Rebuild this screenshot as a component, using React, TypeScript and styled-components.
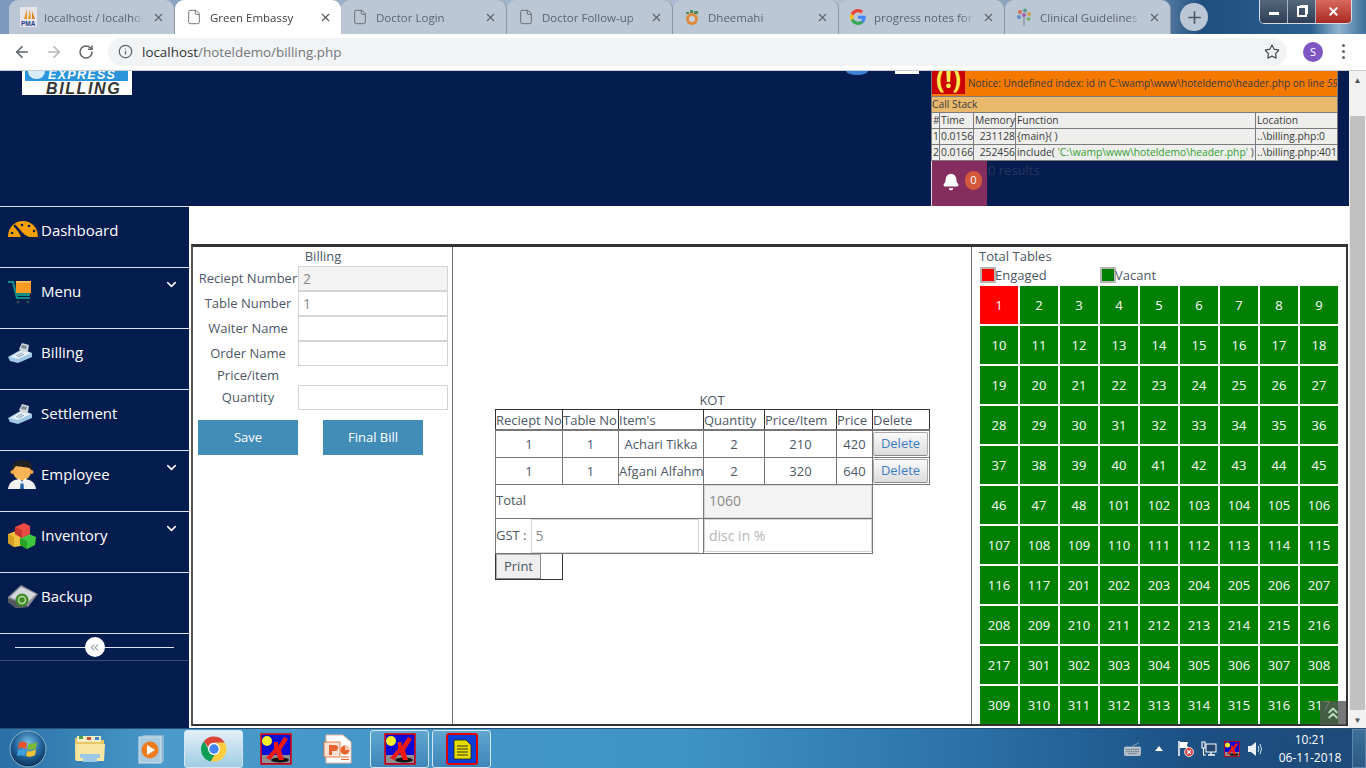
import styled, { createGlobalStyle } from 'styled-components';
import { ChevronDown, ChevronsLeft, ChevronsUp, File, Plus, X, ArrowLeft, ArrowRight, RotateCw, Info, Star, Bell } from 'lucide-react';

const GlobalStyle = createGlobalStyle`
  html, body {
    margin: 0;
    padding: 0;
    height: 100%;
    overflow: hidden;
  }
  * {
    box-sizing: border-box;
  }
  body {
    font-family: "Open Sans", "Liberation Sans", sans-serif;
    font-size: 13px;
    color: #4d5766;
  }
`;

const tabs = [
  { title: 'localhost / localhost', icon: 'pma' },
  { title: 'Green Embassy', icon: 'doc', active: true },
  { title: 'Doctor Login', icon: 'doc' },
  { title: 'Doctor Follow-up', icon: 'doc' },
  { title: 'Dheemahi', icon: 'dhee' },
  { title: 'progress notes for patient', icon: 'google' },
  { title: 'Clinical Guidelines (', icon: 'tree' },
];

const tableNumbers = [
  ...Array.from({ length: 48 }, (_, i) => i + 1),
  ...Array.from({ length: 17 }, (_, i) => i + 101),
  ...Array.from({ length: 17 }, (_, i) => i + 201),
  ...Array.from({ length: 17 }, (_, i) => i + 301),
];

const kotRows = [
  { receipt: 1, table: 1, item: 'Achari Tikka', qty: 2, rate: 210, price: 420 },
  { receipt: 1, table: 1, item: 'Afgani Alfahm', qty: 2, rate: 320, price: 640 },
];

function PmaIcon() {
  return (
    <svg width="17" height="20" viewBox="0 0 17 20">
      <rect width="17" height="20" fill="#e4e4ea" />
      <path d="M4 12 L7 2 L7 12Z" fill="#e8912a" />
      <path d="M8 12 L10 2 L11 12Z" fill="#e8a02a" />
      <path d="M12 12 L12 4 L15 12Z" fill="#d97f1e" />
      <text x="1" y="19" fontSize="6.5" fontWeight="700" fill="#27408b" fontFamily="Liberation Sans">PMA</text>
    </svg>
  );
}

function DheemahiIcon() {
  return (
    <svg width="16" height="18" viewBox="0 0 16 18">
      <circle cx="8" cy="11" r="6" fill="#e08a3c" />
      <circle cx="8" cy="11" r="3" fill="#c9d3df" />
      <path d="M2 4h3v2H2zM6 2h3v3H6zM10 3h4v3h-4z" fill="#4f8a5b" />
    </svg>
  );
}

function GoogleIcon() {
  return (
    <svg width="16" height="16" viewBox="0 0 48 48">
      <path fill="#EA4335" d="M24 9.5c3.5 0 6.700 1.300 9.100 3.500l6.800-6.800C35.800 2.400 30.300 0 24 0 14.600 0 6.500 5.400 2.600 13.200l7.900 6.100C12.400 13.700 17.700 9.500 24 9.500z" />
      <path fill="#4285F4" d="M46.900 24.500c0-1.600-.1-3.100-.4-4.500H24v9h12.900c-.6 3-2.200 5.500-4.700 7.200l7.700 6c4.500-4.200 7-10.300 7-17.700z" />
      <path fill="#FBBC05" d="M10.500 28.700c-.5-1.500-.8-3-.8-4.700s.3-3.200.8-4.700l-7.900-6.100C.9 16.500 0 20.100 0 24s.9 7.500 2.600 10.800l7.900-6.100z" />
      <path fill="#34A853" d="M24 48c6.500 0 11.900-2.100 15.900-5.800l-7.700-6c-2.100 1.400-4.900 2.300-8.200 2.300-6.300 0-11.600-4.200-13.500-9.800l-7.900 6.100C6.500 42.600 14.600 48 24 48z" />
    </svg>
  );
}

function TreeIcon() {
  return (
    <svg width="16" height="18" viewBox="0 0 16 18">
      <path d="M8 8v10" stroke="#8a9aa8" strokeWidth="1.400" />
      <circle cx="4" cy="4" r="2" fill="#d9694f" />
      <circle cx="9" cy="2.500" r="2" fill="#4f9d8a" />
      <circle cx="13" cy="6" r="2" fill="#c9a04b" />
      <circle cx="3" cy="9" r="2" fill="#5d8fc9" />
      <circle cx="8" cy="7" r="2" fill="#a65fae" />
      <circle cx="12.500" cy="11" r="1.800" fill="#6fae5a" />
    </svg>
  );
}

function TabIcon({ kind }: { kind: string }) {
  if (kind === 'pma') return <PmaIcon />;
  if (kind === 'dhee') return <DheemahiIcon />;
  if (kind === 'google') return <GoogleIcon />;
  if (kind === 'tree') return <TreeIcon />;
  return <File size={16} strokeWidth={1.3} color="#5f6368" />;
}

function GaugeIcon() {
  return (
    <svg width="32" height="24" viewBox="0 0 32 24">
      <path d="M1 18 C1 8 8 2 16 2 C24 2 31 8 31 18 L20 18 L9 8 L14 18Z" fill="#f5a000" />
      <path d="M8 7 L17 17 L21 19" fill="none" stroke="#051c4f" strokeWidth="2.600" strokeLinecap="round" />
      <circle cx="15" cy="6" r="1.300" fill="#051c4f" />
      <circle cx="22" cy="7" r="1.300" fill="#051c4f" />
      <circle cx="27" cy="12" r="1.300" fill="#051c4f" />
      <circle cx="5" cy="14" r="1.300" fill="#051c4f" />
    </svg>
  );
}

function CartIcon() {
  return (
    <svg width="26" height="24" viewBox="0 0 26 24">
      <path d="M1 2 H6 L10 18 H23" fill="none" stroke="#0f8f82" strokeWidth="2.200" />
      <path d="M8 13 H23 V16 H9Z" fill="#0f8f82" />
      <rect x="9" y="1" width="15" height="12" fill="#f59a23" />
      <rect x="9" y="1" width="15" height="2" fill="#fbb95a" />
      <circle cx="11" cy="22" r="1.600" fill="#2f4a55" />
      <circle cx="21" cy="22" r="1.600" fill="#2f4a55" />
    </svg>
  );
}

function RegisterIcon() {
  return (
    <svg width="26" height="22" viewBox="0 0 26 22">
      <path d="M1 15 L15 7 L25 11 L25 15 L11 21 L3 19Z" fill="#9fc7e6" />
      <path d="M3 15 L15 8 L24 11 L11 17Z" fill="#e6eff6" />
      <path d="M12 7 L15 1 L22 3 L21 9 L16 10Z" fill="#cfd6dc" />
      <path d="M15 3 L20 4 L19 7 L14 6Z" fill="#7d8a94" />
      <path d="M9 14 L15 11 M11 15 L17 12" stroke="#8aa0b0" strokeWidth="1" />
    </svg>
  );
}

function EmployeeIcon() {
  return (
    <svg width="30" height="30" viewBox="0 0 30 30">
      <path d="M1 29 C2 21 8 19 15 19 C22 19 28 21 29 29Z" fill="#f1f1f1" />
      <path d="M14 20 L16 20 L17 29 L13 29Z" fill="#1f5fa8" />
      <ellipse cx="15" cy="11" rx="9" ry="9.500" fill="#f8b556" />
      <circle cx="5.500" cy="12" r="2" fill="#f1a640" />
      <circle cx="24.500" cy="12" r="2" fill="#f1a640" />
      <path d="M5 10 C4 3 10 0 16 0 C23 0 26 4 25 10 C22 6 15 8 9 6 C8 8 6 9 5 10Z" fill="#222" />
      <path d="M11 18 L15 22 L19 18 L19 20 L15 24 L11 20Z" fill="#fff" />
    </svg>
  );
}

function BlocksIcon() {
  return (
    <svg width="30" height="28" viewBox="0 0 30 28">
      <path d="M1 12 L9 9 L15 13 L14 24 L7 25 L1 21Z" fill="#eebf3e" />
      <path d="M1 12 L7 15 L7 25 L1 21Z" fill="#d69f24" />
      <path d="M13 16 L22 12 L29 15 L28 23 L20 27 L13 23Z" fill="#3ec63e" />
      <path d="M13 16 L20 19 L20 27 L13 23Z" fill="#2aa22a" />
      <path d="M8 5 L17 1 L23 4 L23 12 L15 16 L8 12Z" fill="#ef4b45" />
      <path d="M8 5 L15 8 L15 16 L8 12Z" fill="#c93530" />
    </svg>
  );
}

function BackupIcon() {
  return (
    <svg width="32" height="26" viewBox="0 0 32 26">
      <path d="M1 13 L14 1 L31 10 L21 23 L9 24 L1 18Z" fill="#8b9097" />
      <path d="M3 13 L14 3 L29 10 L19 20Z" fill="#d5d8dc" />
      <path d="M1 14 L19 21 L21 23 L9 24 L1 18Z" fill="#54585e" />
      <circle cx="15" cy="16" r="6.500" fill="#3d8a24" />
      <circle cx="15" cy="16" r="3.500" fill="none" stroke="#b5d9a5" strokeWidth="1.500" />
    </svg>
  );
}

function StartOrb() {
  return (
    <svg width="38" height="38" viewBox="0 0 38 38">
      <defs>
        <radialGradient id="orb" cx="50%" cy="35%" r="65%">
          <stop offset="0" stopColor="#7cc4e8" />
          <stop offset="0.6" stopColor="#1f5f96" />
          <stop offset="1" stopColor="#0b2f55" />
        </radialGradient>
      </defs>
      <circle cx="19" cy="19" r="18" fill="url(#orb)" stroke="#8bb7d2" strokeWidth="1" />
      <path d="M10 13 C13 11 15 12 18 13 L17 19 C14 18 12 17 9 19Z" fill="#e8552b" />
      <path d="M19.500 13 C22 14 25 14 28 12 L27 18 C24 20 21 20 18.500 19Z" fill="#7dbb32" />
      <path d="M9 20 C12 19 14 19 17 20 L16 26 C13 25 11 25 8 26Z" fill="#3b9fe0" />
      <path d="M18 21 C21 22 24 21 27 19 L26 25 C23 27 20 27 17 26Z" fill="#f6c52f" />
    </svg>
  );
}

function FolderIcon() {
  return (
    <svg width="32" height="30" viewBox="0 0 32 30">
      <path d="M1 4 H12 L14 6 H30 V26 H1Z" fill="#e7c766" />
      <rect x="3" y="2" width="24" height="6" fill="#f8eec4" />
      <rect x="5" y="2" width="4" height="3" fill="#4da24c" />
      <rect x="13" y="3" width="4" height="3" fill="#cf4b3d" />
      <rect x="21" y="3" width="4" height="3" fill="#3d86c9" />
      <path d="M1 10 H31 L30 27 H2Z" fill="#f8e6a2" />
      <path d="M6 20 H26 V24 H23 V28 H9 V24 H6Z" fill="#9cc9e6" />
    </svg>
  );
}

function MediaIcon() {
  return (
    <svg width="28" height="32" viewBox="0 0 28 32">
      <rect x="5" y="2" width="21" height="27" fill="#8eb5cf" />
      <rect x="1" y="4" width="22" height="26" fill="#a9cbe0" stroke="#d3e3ee" />
      <circle cx="12" cy="17" r="8.500" fill="#ed7d1f" />
      <path d="M9 12 L17 17 L9 22Z" fill="#fff" />
    </svg>
  );
}

function ChromeIcon() {
  return (
    <svg width="30" height="30" viewBox="0 0 48 48">
      <path fill="#db4437" d="M24 4a20 20 0 0 1 17.300 10H24a10 10 0 0 0-9.500 6.900L7.800 11.700A20 20 0 0 1 24 4z" />
      <path fill="#0f9d58" d="M7.800 11.700l8.600 14.900a10 10 0 0 0 8.700 7.300l-6 10.200A20 20 0 0 1 7.800 11.700z" />
      <path fill="#ffcd40" d="M41.300 14A20 20 0 0 1 19 43.400l8.700-14.900a10 10 0 0 0-.8-14.500z" />
      <circle cx="24" cy="24" r="9.500" fill="#fff" />
      <circle cx="24" cy="24" r="7.500" fill="#4285f4" />
    </svg>
  );
}

function XAppIcon() {
  return (
    <svg width="32" height="32" viewBox="0 0 32 32">
      <rect x="1" y="1" width="30" height="30" fill="#0b0bd8" stroke="#e00000" strokeWidth="1.500" />
      <rect x="2" y="22" width="28" height="8" fill="#8f8f8f" />
      <circle cx="7" cy="8" r="5" fill="#f2ee2b" />
      <ellipse cx="20" cy="27" rx="9" ry="2.500" fill="#111" />
      <path d="M24 4 L28 6 L21 17 L24 27 L19 27 L16 20 L10 27 L6 25 L14 16 L14 9 L18 9 L18 13Z" fill="#ee1a10" />
    </svg>
  );
}

function PowerPointIcon() {
  return (
    <svg width="30" height="32" viewBox="0 0 30 32">
      <path d="M3 2 H20 L28 9 V30 H3Z" fill="#fff" stroke="#e9b6a0" />
      <path d="M1 9 H17 V24 H1Z" fill="#fbe2d6" stroke="#e8642c" strokeWidth="0.800" />
      <path d="M6 12 H12 C14 12 15 13 15 15 C15 17 14 18 12 18 H9 V22 H6Z" fill="#e8642c" />
      <circle cx="22" cy="17" r="4.500" fill="#e8642c" />
      <path d="M22 17 V12.500 A4.500 4.500 0 0 1 26.500 17Z" fill="#f9c9b3" />
      <path d="M18 24 H26 M18 26.500 H26" stroke="#e8642c" strokeWidth="1" />
    </svg>
  );
}

function NoteAppIcon() {
  return (
    <svg width="32" height="32" viewBox="0 0 32 32">
      <rect x="1" y="1" width="30" height="30" rx="2" fill="#0b3fd8" stroke="#e00000" strokeWidth="2" />
      <path d="M8 7 H20 L25 12 V26 H8Z" fill="#e6dc00" stroke="#222" strokeWidth="0.800" />
      <path d="M11 13 H22 M11 16 H22 M11 19 H22 M11 22 H22" stroke="#222" strokeWidth="0.900" />
    </svg>
  );
}

function TrayFlagIcon() {
  return (
    <svg width="17" height="17" viewBox="0 0 17 17">
      <path d="M2 1 V16" stroke="#fff" strokeWidth="1.500" />
      <path d="M3 2 H11 L10 5 L11 8 H3Z" fill="#fff" />
      <circle cx="12" cy="12" r="4.500" fill="#e23b3b" stroke="#fff" strokeWidth="0.800" />
      <path d="M10 10 L14 14 M14 10 L10 14" stroke="#fff" strokeWidth="1.200" />
    </svg>
  );
}

function TrayNetworkIcon() {
  return (
    <svg width="16" height="16" viewBox="0 0 16 16">
      <rect x="5" y="3" width="10" height="8" fill="#24466e" stroke="#fff" />
      <path d="M7 14 H14 M10 11 V14" stroke="#fff" strokeWidth="1.300" />
      <path d="M1 1 H4 V7 H1Z M2.500 7 V14 H5" fill="none" stroke="#fff" strokeWidth="1.100" />
    </svg>
  );
}

function TrayVolumeIcon() {
  return (
    <svg width="17" height="16" viewBox="0 0 17 16">
      <path d="M1 5 H4 L9 1 V15 L4 11 H1Z" fill="#e8eef4" />
      <path d="M11 5 Q13 8 11 11 M13 3 Q16 8 13 13" fill="none" stroke="#d5e0ea" strokeWidth="1" />
    </svg>
  );
}

function TrayKeyboardIcon() {
  return (
    <svg width="17" height="14" viewBox="0 0 17 14">
      <rect x="0.500" y="5" width="16" height="8.500" rx="1" fill="#aeb9c4" stroke="#dfe5ea" strokeWidth="0.600" />
      <path d="M2 7.500 H15 M2 9.500 H15 M4 11.500 H13" stroke="#6f7d8a" strokeWidth="1" strokeDasharray="1.500 0.800" />
      <path d="M9 5 C9 2 13 3 15 0.500" fill="none" stroke="#aeb9c4" strokeWidth="0.800" />
    </svg>
  );
}

export default function App() {
  return (
    <>
      <GlobalStyle />
      <Screen>
        <TabStrip>
          <TabList>
            {tabs.map((tab) => (
              <Tab key={tab.title} $active={tab.active}>
                <TabIconBox>
                  <TabIcon kind={tab.icon} />
                </TabIconBox>
                <TabTitle>{tab.title}</TabTitle>
                <X size={13} strokeWidth={2} color={tab.active ? '#555' : '#5f6368'} />
              </Tab>
            ))}
          </TabList>
          <NewTab>
            <Plus size={19} strokeWidth={2.2} color="#4f5b6b" />
          </NewTab>
          <WindowControls>
            <WinButton>
              <MinGlyph />
            </WinButton>
            <WinButton>
              <RestoreGlyph />
            </WinButton>
            <WinClose>
              <X size={13} strokeWidth={3.5} color="#fff" />
            </WinClose>
          </WindowControls>
        </TabStrip>

        <Toolbar>
          <NavIcon>
            <ArrowLeft size={18} color="#5f6368" strokeWidth={2.2} />
          </NavIcon>
          <NavIcon>
            <ArrowRight size={18} color="#b4b6b9" strokeWidth={2.2} />
          </NavIcon>
          <NavIcon>
            <RotateCw size={16} color="#5f6368" strokeWidth={2.2} />
          </NavIcon>
          <Omnibox>
            <Info size={15} color="#5f6368" strokeWidth={2} />
            <UrlText>
              <UrlHost>localhost</UrlHost>/hoteldemo/billing.php
            </UrlText>
            <OmniStar>
              <Star size={16} color="#4a4e52" strokeWidth={1.8} />
            </OmniStar>
          </Omnibox>
          <Avatar>S</Avatar>
          <MenuDots>
            <i />
            <i />
            <i />
          </MenuDots>
        </Toolbar>

        <Viewport>
          <Page>
            <Header>
              <Logo>
                <LogoTop>
                  <LogoGlobe />
                  EXPRESS
                </LogoTop>
                <LogoBottom>BILLING</LogoBottom>
              </Logo>
              <HeaderDot />
              <HeaderBar />
              <HeaderRight>
                <ErrorTable>
                  <colgroup>
                    <col width="8" />
                    <col width="34" />
                    <col width="42" />
                    <col width="240" />
                    <col width="82" />
                  </colgroup>
                  <tbody>
                    <tr>
                      <NoticeCell colSpan={5}>
                        <NoticeRow>
                          <NoticeMark>(!)</NoticeMark>
                          <NoticeText>
                            Notice: Undefined index: id in C:\wamp\www\hoteldemo\header.php on line <em>59</em>
                          </NoticeText>
                        </NoticeRow>
                      </NoticeCell>
                    </tr>
                    <tr>
                      <StackTitle colSpan={5}>Call Stack</StackTitle>
                    </tr>
                    <tr>
                      <ErrorHead>#</ErrorHead>
                      <ErrorHead>Time</ErrorHead>
                      <ErrorHead>Memory</ErrorHead>
                      <ErrorHead>Function</ErrorHead>
                      <ErrorHead>Location</ErrorHead>
                    </tr>
                    <tr>
                      <ErrorCell>1</ErrorCell>
                      <ErrorCell>0.0156</ErrorCell>
                      <ErrorCell $right>231128</ErrorCell>
                      <ErrorCell>{'{main}( )'}</ErrorCell>
                      <ErrorCell>..\billing.php:0</ErrorCell>
                    </tr>
                    <tr>
                      <ErrorCell>2</ErrorCell>
                      <ErrorCell>0.0166</ErrorCell>
                      <ErrorCell $right>252456</ErrorCell>
                      <ErrorCell>
                        include( <GreenText>'C:\wamp\www\hoteldemo\header.php'</GreenText> )
                      </ErrorCell>
                      <ErrorCell>..\billing.php:401</ErrorCell>
                    </tr>
                  </tbody>
                </ErrorTable>
                <NotifyRow>
                  <BellBox>
                    <Bell size={18} color="#fff" fill="#fff" />
                    <BellBadge>0</BellBadge>
                  </BellBox>
                  <ResultsText>0 results</ResultsText>
                </NotifyRow>
              </HeaderRight>
            </Header>

            <Body>
              <Sidebar>
                <SideItem>
                  <SideIcon><GaugeIcon /></SideIcon>
                  <SideLabel>Dashboard</SideLabel>
                </SideItem>
                <SideItem>
                  <SideIcon><CartIcon /></SideIcon>
                  <SideLabel>Menu</SideLabel>
                  <SideChevron><ChevronDown size={15} strokeWidth={2.4} color="#fff" /></SideChevron>
                </SideItem>
                <SideItem>
                  <SideIcon><RegisterIcon /></SideIcon>
                  <SideLabel>Billing</SideLabel>
                </SideItem>
                <SideItem>
                  <SideIcon><RegisterIcon /></SideIcon>
                  <SideLabel>Settlement</SideLabel>
                </SideItem>
                <SideItem>
                  <SideIcon><EmployeeIcon /></SideIcon>
                  <SideLabel>Employee</SideLabel>
                  <SideChevron><ChevronDown size={15} strokeWidth={2.4} color="#fff" /></SideChevron>
                </SideItem>
                <SideItem>
                  <SideIcon><BlocksIcon /></SideIcon>
                  <SideLabel>Inventory</SideLabel>
                  <SideChevron><ChevronDown size={15} strokeWidth={2.4} color="#fff" /></SideChevron>
                </SideItem>
                <SideItem>
                  <SideIcon><BackupIcon /></SideIcon>
                  <SideLabel>Backup</SideLabel>
                </SideItem>
                <SideToggle>
                  <ToggleKnob>
                    <ChevronsLeft size={13} color="#9aa3ad" strokeWidth={2} />
                  </ToggleKnob>
                </SideToggle>
              </Sidebar>

              <Main>
                <Panel>
                  <BillingColumn>
                    <ColumnTitle>Billing</ColumnTitle>
                    <FormGrid>
                      <FieldLabel>Reciept Number</FieldLabel>
                      <FieldInput value="2" disabled readOnly />
                      <FieldLabel>Table Number</FieldLabel>
                      <FieldInput value="1" readOnly />
                      <FieldLabel>Waiter Name</FieldLabel>
                      <FieldInput readOnly />
                      <FieldLabel>Order Name</FieldLabel>
                      <FieldInput readOnly />
                      <FieldLabel>Price/item</FieldLabel>
                      <span />
                      <FieldLabel>Quantity</FieldLabel>
                      <FieldInput readOnly />
                    </FormGrid>
                    <ActionRow>
                      <ActionButton>Save</ActionButton>
                      <ActionButton>Final Bill</ActionButton>
                    </ActionRow>
                  </BillingColumn>

                  <KotColumn>
                    <KotTitle>KOT</KotTitle>
                    <KotTable>
                      <colgroup>
                        <col width="67" />
                        <col width="56" />
                        <col width="85" />
                        <col width="61" />
                        <col width="72" />
                        <col width="36" />
                        <col width="57" />
                      </colgroup>
                      <tbody>
                        <tr>
                          <KotHead>Reciept No</KotHead>
                          <KotHead>Table No</KotHead>
                          <KotHead>Item's</KotHead>
                          <KotHead>Quantity</KotHead>
                          <KotHead>Price/Item</KotHead>
                          <KotHead>Price</KotHead>
                          <KotHead>Delete</KotHead>
                        </tr>
                        {kotRows.map((row) => (
                          <tr key={row.item}>
                            <KotCell>{row.receipt}</KotCell>
                            <KotCell>{row.table}</KotCell>
                            <KotCell>{row.item}</KotCell>
                            <KotCell>{row.qty}</KotCell>
                            <KotCell>{row.rate}</KotCell>
                            <KotCell>{row.price}</KotCell>
                            <KotButtonCell>
                              <DeleteButton>Delete</DeleteButton>
                            </KotButtonCell>
                          </tr>
                        ))}
                        <tr>
                          <TotalCell colSpan={3}>Total</TotalCell>
                          <InputCell colSpan={3}>
                            <KotInput value="1060" disabled readOnly />
                          </InputCell>
                        </tr>
                        <tr>
                          <GstCell colSpan={3}>
                            <GstRow>
                              GST :
                              <GstInput value="5" readOnly />
                            </GstRow>
                          </GstCell>
                          <InputCell colSpan={3}>
                            <KotInput placeholder="disc in %" readOnly />
                          </InputCell>
                        </tr>
                        <tr>
                          <PrintCell>
                            <PrintButton>Print</PrintButton>
                          </PrintCell>
                        </tr>
                      </tbody>
                    </KotTable>
                  </KotColumn>

                  <TablesColumn>
                    <TablesTitle>Total Tables</TablesTitle>
                    <Legend>
                      <LegendItem>
                        <LegendSwatch $color="#ff0000" />
                        Engaged
                      </LegendItem>
                      <LegendItem>
                        <LegendSwatch $color="#008000" />
                        Vacant
                      </LegendItem>
                    </Legend>
                    <TileGrid>
                      {tableNumbers.map((n) => (
                        <Tile key={n} $engaged={n === 1}>
                          {n}
                        </Tile>
                      ))}
                    </TileGrid>
                  </TablesColumn>
                </Panel>
                <BackToTop>
                  <ChevronsUp size={18} color="#b7dcb7" strokeWidth={2.6} />
                </BackToTop>
              </Main>
            </Body>
          </Page>
          <Scrollbar>
            <ScrollArrow>▲</ScrollArrow>
            <ScrollThumb />
            <ScrollArrow>▼</ScrollArrow>
          </Scrollbar>
        </Viewport>

        <Taskbar>
          <OrbSlot>
            <StartOrb />
          </OrbSlot>
          <TaskItem><FolderIcon /></TaskItem>
          <TaskItem><MediaIcon /></TaskItem>
          <TaskItem $state="active"><ChromeIcon /></TaskItem>
          <TaskItem><XAppIcon /></TaskItem>
          <TaskItem><PowerPointIcon /></TaskItem>
          <TaskItem $state="open"><XAppIcon /></TaskItem>
          <TaskItem $state="open"><NoteAppIcon /></TaskItem>
          <Tray>
            <TrayKeyboardIcon />
            <TrayArrow />
            <TrayFlagIcon />
            <TrayNetworkIcon />
            <TrayApp><XAppIcon /></TrayApp>
            <TrayVolumeIcon />
            <Clock>
              <span>10:21</span>
              <span>06-11-2018</span>
            </Clock>
          </Tray>
          <ShowDesktop />
        </Taskbar>
      </Screen>
    </>
  );
}

const Screen = styled.div`
  width: 1366px;
  height: 768px;
  display: flex;
  flex-direction: column;
  overflow: hidden;
  background: #fff;
`;

const TabStrip = styled.div`
  height: 34px;
  flex: none;
  display: flex;
  align-items: flex-end;
  padding-left: 9px;
  background: linear-gradient(90deg, #7f99bd 0%, #9fb2cb 30%, #b3c0d2 60%, #6f8fb0 84%, #1f4f7e 88%, #2a5f8f 96%, #8fb3cf 98%, #3d6f9a 100%);
`;

const TabList = styled.div`
  display: flex;
  height: 34px;
`;

const Tab = styled.div<{ $active?: boolean }>`
  width: 166px;
  height: 34px;
  display: flex;
  align-items: center;
  padding: 0 9px 0 11px;
  border-radius: 9px 9px 0 0;
  background: ${({ $active }) => ($active ? '#fff' : '#bcc7d6')};
  color: ${({ $active }) => ($active ? '#3c4043' : '#5a6472')};
  border-right: ${({ $active }) => ($active ? 'none' : '1px solid #8a96a6')};
  font-size: 11.5px;
`;

const TabIconBox = styled.span`
  width: 24px;
  flex: none;
  display: flex;
  align-items: center;
`;

const TabTitle = styled.span`
  flex: 1;
  overflow: hidden;
  white-space: nowrap;
  margin-right: 8px;
  mask-image: linear-gradient(90deg, #000 88%, transparent 100%);
`;

const NewTab = styled.div`
  width: 28px;
  height: 28px;
  margin: 0 0 3px 9px;
  border-radius: 50%;
  background: #bcc7d6;
  display: flex;
  align-items: center;
  justify-content: center;
`;

const WindowControls = styled.div`
  margin-left: auto;
  margin-right: 14px;
  align-self: flex-start;
  display: flex;
  height: 24px;
  border: 1px solid #d5dde6;
  border-top: none;
  border-radius: 0 0 5px 5px;
  overflow: hidden;
`;

const WinButton = styled.div`
  width: 28px;
  display: flex;
  align-items: center;
  justify-content: center;
  background: linear-gradient(#55677c, #2e3f55);
  border-right: 1px solid #a7b4c2;
`;

const WinClose = styled.div`
  width: 35px;
  display: flex;
  align-items: center;
  justify-content: center;
  background: linear-gradient(#d8695c, #a82a22);
`;

const MinGlyph = styled.span`
  width: 10px;
  height: 3px;
  margin-top: 4px;
  background: #fff;
`;

const RestoreGlyph = styled.span`
  width: 10px;
  height: 11px;
  border: 2px solid #fff;
  box-shadow: 2px -2px 0 -1px #fff;
`;

const Toolbar = styled.div`
  height: 37px;
  flex: none;
  display: flex;
  align-items: center;
  padding: 0 0 1px 6px;
  background: #fff;
  border-bottom: 1px solid #c9ccd0;
`;

const NavIcon = styled.div`
  width: 32px;
  display: flex;
  justify-content: center;
`;

const Omnibox = styled.div`
  width: 1179px;
  height: 28px;
  margin-left: 6px;
  padding: 0 7px 0 10px;
  border-radius: 14px;
  background: #f1f3f4;
  display: flex;
  align-items: center;
`;

const UrlText = styled.span`
  margin-left: 9px;
  font-size: 13.4px;
  color: #74777b;
`;

const UrlHost = styled.span`
  color: #303336;
`;

const OmniStar = styled.span`
  margin-left: auto;
  display: flex;
`;

const Avatar = styled.div`
  width: 20px;
  height: 20px;
  margin-left: 16px;
  border-radius: 50%;
  background: #7e57c2;
  color: #fff;
  font-size: 11px;
  display: flex;
  align-items: center;
  justify-content: center;
`;

const MenuDots = styled.div`
  margin-left: 19px;
  display: flex;
  flex-direction: column;
  gap: 3px;

  i {
    width: 3px;
    height: 3px;
    border-radius: 50%;
    background: #5f6368;
  }
`;

const Viewport = styled.div`
  height: 657px;
  flex: none;
  display: flex;
  overflow: hidden;
`;

const Page = styled.div`
  width: 1349px;
  display: flex;
  flex-direction: column;
`;

const Header = styled.header`
  height: 135px;
  flex: none;
  display: flex;
  align-items: flex-start;
  padding-left: 22px;
  background: #051c4f;
`;

const Logo = styled.div`
  width: 110px;
  height: 24px;
  background: #fff;
  overflow: hidden;
`;

const LogoTop = styled.div`
  height: 10px;
  margin: 0 4px 0 3px;
  padding-left: 3px;
  display: flex;
  align-items: flex-start;
  gap: 3px;
  background: #2a95da;
  color: #fff;
  font: italic 700 12.5px/9px "Liberation Sans", sans-serif;
  letter-spacing: 1.3px;
  white-space: nowrap;
`;

const LogoGlobe = styled.span`
  width: 17px;
  height: 8px;
  border-radius: 0 0 9px 9px;
  background: #d7ebf8;
`;

const LogoBottom = styled.div`
  margin-top: 1px;
  padding-left: 24px;
  color: #333;
  font: italic 700 16px/13px "Liberation Sans", sans-serif;
  letter-spacing: 1.6px;
`;

const HeaderDot = styled.span`
  width: 22px;
  height: 4px;
  margin-left: 714px;
  border-radius: 0 0 11px 11px / 0 0 4px 4px;
  background: #3e82d6;
`;

const HeaderBar = styled.span`
  width: 24px;
  height: 3px;
  margin-left: 27px;
  background: #fff;
`;

const HeaderRight = styled.div`
  width: 406px;
  margin-left: 12px;
  display: flex;
  flex-direction: column;
`;

const ErrorTable = styled.table`
  width: 407px;
  table-layout: fixed;
  border-collapse: collapse;
  font-size: 10.3px;
  color: #3a3a3a;
  line-height: 14px;
  white-space: nowrap;
`;

const NoticeCell = styled.td`
  height: 25px;
  padding: 0;
  background: #f57900;
  border: 1px solid #7b7b7b;
  border-top: none;
  overflow: hidden;
`;

const NoticeRow = styled.div`
  display: flex;
  height: 24px;
  align-items: center;
  overflow: hidden;
`;

const NoticeMark = styled.span`
  width: 33px;
  height: 23px;
  margin-top: -1px;
  flex: none;
  background: #cc0000;
  color: #fce94f;
  font-size: 26px;
  font-weight: 700;
  line-height: 15px;
  text-align: center;
  overflow: hidden;
  white-space: nowrap;
`;

const NoticeText = styled.span`
  margin-left: 3px;
  font-size: 10.05px;
  white-space: nowrap;
`;

const StackTitle = styled.td`
  height: 16px;
  padding: 0;
  background: #e9b96e;
  border: 1px solid #7b7b7b;
`;

const ErrorHead = styled.td`
  height: 16px;
  padding: 0 0 0 1px;
  background: #eeeeec;
  border: 1px solid #7b7b7b;
`;

const ErrorCell = styled.td<{ $right?: boolean }>`
  height: 16px;
  padding: 0 0 0 1px;
  background: #eeeeec;
  border: 1px solid #7b7b7b;
  text-align: ${({ $right }) => ($right ? 'right' : 'left')};
  overflow: hidden;
`;

const GreenText = styled.span`
  color: #2fa02f;
`;

const NotifyRow = styled.div`
  display: flex;
`;

const BellBox = styled.div`
  width: 56px;
  height: 46px;
  padding: 10px 5px 0 10px;
  border-left: 1px solid #e6dbe3;
  background: #862d5f;
  display: flex;
  align-items: flex-start;
  justify-content: space-between;

  svg {
    margin-top: 2px;
  }
`;

const BellBadge = styled.span`
  width: 17px;
  height: 19px;
  border-radius: 9px;
  background: #d4593c;
  color: #fff;
  font-size: 11px;
  line-height: 18px;
  text-align: center;
`;

const ResultsText = styled.span`
  margin: 0 0 0 1px;
  color: #27375f;
`;

const Body = styled.div`
  flex: 1;
  display: flex;
  min-height: 0;
`;

const Sidebar = styled.nav`
  width: 189px;
  flex: none;
  background: #051c4f;
  border-top: 1px solid #dfe2ea;
  margin-right: 2px;
`;

const SideItem = styled.div`
  height: 61px;
  display: flex;
  align-items: flex-start;
  padding-top: 13px;
  border-bottom: 1px solid #dfe2ea;
  color: #fff;
  font-size: 15px;
  line-height: 20px;
`;

const SideIcon = styled.span`
  width: 41px;
  height: 22px;
  flex: none;
  padding-left: 7px;
  display: flex;
  align-items: center;
`;

const SideLabel = styled.span`
  flex: 1;
`;

const SideChevron = styled.span`
  margin: -4px 10px 0 0;
  display: flex;
`;

const SideToggle = styled.div`
  height: 27px;
  padding: 0 15px;
  border-bottom: 1px solid #3b4d75;
  display: flex;
  align-items: center;
  justify-content: center;
  background: linear-gradient(#dfe2ea, #dfe2ea) center / 159px 1px no-repeat;
`;

const ToggleKnob = styled.span`
  width: 20px;
  height: 20px;
  border-radius: 50%;
  background: #fff;
  display: flex;
  align-items: center;
  justify-content: center;
`;

const Main = styled.main`
  position: relative;
  flex: 1;
  padding: 38px 1px 2px 0;
  background: #fff;
`;

const Panel = styled.div`
  height: 100%;
  display: flex;
  border: 2px solid #333;
  border-left-color: #555;
  border-top-width: 3px;
`;

const BillingColumn = styled.section`
  width: 260px;
  flex: none;
  padding: 1px 0 0 5px;
  border-right: 1px solid #777;
`;

const ColumnTitle = styled.div`
  width: 250px;
  height: 18px;
  line-height: 17px;
  text-align: center;
`;

const FormGrid = styled.div`
  display: grid;
  grid-template-columns: 100px 150px;
  grid-template-rows: 25px 25px 25px 25px 19px 25px;
`;

const FieldLabel = styled.label`
  align-self: center;
  margin-top: -2px;
  text-align: center;
`;

const FieldInput = styled.input`
  width: 150px;
  height: 25px;
  padding: 0 4px;
  border: 1px solid #d4d4d4;
  background: #fff;
  font: inherit;
  font-size: 14px;
  color: #8a8a8a;
  outline: none;

  &:disabled {
    background: #f3f3f3;
  }
`;

const ActionRow = styled.div`
  display: flex;
  gap: 25px;
  margin-top: 10px;
`;

const ActionButton = styled.button`
  width: 100px;
  height: 35px;
  padding: 0 0 2px;
  border: none;
  background: #428cb8;
  color: #fff;
  font: inherit;
`;

const KotColumn = styled.section`
  width: 519px;
  flex: none;
  padding-left: 42px;
  display: flex;
  flex-direction: column;
  justify-content: center;
  border-right: 1px solid #777;
`;

const KotTitle = styled.div`
  width: 434px;
  height: 18px;
  line-height: 18px;
  text-align: center;
`;

const KotTable = styled.table`
  width: 434px;
  table-layout: fixed;
  border-collapse: collapse;
  line-height: 17px;
`;

const KotHead = styled.td`
  height: 20px;
  padding: 1px 0 0;
  border: 1px solid #333;
  border-bottom: 2px solid #777;
  white-space: nowrap;
  overflow: hidden;
`;

const KotCell = styled.td`
  height: 26px;
  padding: 1px 0 0;
  text-align: center;
  border: 1px solid #777;
  white-space: nowrap;
  overflow: hidden;
`;

const KotButtonCell = styled(KotCell)`
  padding: 1px 0;
`;

const DeleteButton = styled.button`
  width: 55px;
  height: 24px;
  padding: 0;
  display: block;
  border: 1px solid #aaa;
  border-bottom-color: #888;
  border-radius: 2px;
  background: linear-gradient(#fafafa, #dcdcdc);
  color: #3d7cc4;
  font: inherit;
`;

const TotalCell = styled.td`
  height: 34px;
  padding: 0 0 2px;
  border: 1px solid #777;
`;

const GstCell = styled(TotalCell)`
  height: 35px;
  padding: 0;
`;

const InputCell = styled.td`
  padding: 0;
  border: 1px solid #777;
`;

const KotInput = styled.input`
  width: 100%;
  height: 33px;
  display: block;
  padding: 0 4px 1px;
  border: 1px solid #d4d4d4;
  background: #fff;
  font: inherit;
  font-size: 14px;
  color: #8a8a8a;
  outline: none;

  &:disabled {
    background: #f3f3f3;
  }

  &::placeholder {
    color: #b5b5b5;
  }
`;

const GstRow = styled.div`
  display: flex;
  align-items: center;
  gap: 4px;
`;

const GstInput = styled.input`
  width: 168px;
  height: 34px;
  padding: 0 4px;
  border: 1px solid #d4d4d4;
  font: inherit;
  font-size: 14px;
  color: #8a8a8a;
  outline: none;
`;

const PrintCell = styled.td`
  padding: 0;
  border: 1px solid #333;
`;

const PrintButton = styled.button`
  width: 45px;
  height: 25px;
  display: block;
  padding: 0;
  border: 1px solid #aaa;
  border-right-color: #888;
  border-bottom-color: #888;
  background: #efefef;
  color: #4d5766;
  font: inherit;
`;

const TablesColumn = styled.section`
  flex: 1;
  padding: 0 0 0 7px;
`;

const TablesTitle = styled.div`
  height: 19px;
  line-height: 19px;
`;

const Legend = styled.div`
  display: flex;
  height: 18px;
  align-items: center;
  margin: 0 0 2px 1px;
  line-height: 16px;
`;

const LegendItem = styled.div`
  width: 120px;
  display: flex;
  align-items: center;
  margin-left: 0;
  text-indent: -1px;
`;

const LegendSwatch = styled.span<{ $color: string }>`
  width: 16px;
  height: 16px;
  border: 2px solid #b5b5b5;
  background: ${({ $color }) => $color};
`;

const TileGrid = styled.div`
  display: grid;
  margin-left: 1px;
  grid-template-columns: repeat(9, 38px);
  grid-auto-rows: 38px;
  gap: 2px;
`;

const Tile = styled.div<{ $engaged?: boolean }>`
  display: flex;
  align-items: center;
  justify-content: center;
  background: ${({ $engaged }) => ($engaged ? '#ff0000' : '#008000')};
  color: #fff;
`;

const BackToTop = styled.div`
  position: absolute;
  right: 3px;
  bottom: 3px;
  width: 26px;
  height: 24px;
  background: rgba(85, 85, 85, 0.8);
  display: flex;
  align-items: center;
  justify-content: center;
`;

const Scrollbar = styled.div`
  width: 17px;
  flex: none;
  display: flex;
  flex-direction: column;
  align-items: center;
  background: #f1f1f1;
`;

const ScrollArrow = styled.div`
  height: 17px;
  font-size: 8px;
  line-height: 17px;
  color: #505050;
`;

const ScrollThumb = styled.div`
  width: 15px;
  flex: 1;
  margin: 28px 0 1px;
  background: #c1c1c1;
`;

const Taskbar = styled.footer`
  height: 40px;
  flex: none;
  display: flex;
  align-items: center;
  background: linear-gradient(90deg, #2a6fa5 0%, #4a9acb 12%, #3f93c6 50%, #2a6fa5 72%, #1c4f82 88%, #1d4a78 100%);
  border-top: 1px solid #274f74;
`;

const OrbSlot = styled.div`
  width: 60px;
  padding-left: 9px;
  display: flex;
`;

const TaskItem = styled.div<{ $state?: 'active' | 'open' }>`
  width: 59px;
  height: 38px;
  margin-right: 3px;
  border-radius: 3px;
  display: flex;
  align-items: center;
  justify-content: center;
  border: ${({ $state }) => ($state ? '1px solid #d4e6f1' : '1px solid transparent')};
  background: ${({ $state }) =>
    $state === 'active'
      ? 'linear-gradient(#e3f0f8, #9fcbe4)'
      : $state === 'open'
        ? 'linear-gradient(#5fa6d0, #3d86b8)'
        : 'transparent'};
`;

const Tray = styled.div`
  margin-left: auto;
  display: flex;
  align-items: center;
  gap: 7px;
  padding-right: 4px;
  color: #fff;
`;

const TrayArrow = styled.span`
  margin: 0 7px;
  border-left: 4px solid transparent;
  border-right: 4px solid transparent;
  border-bottom: 5px solid #fff;
`;

const TrayApp = styled.span`
  display: flex;

  svg {
    width: 16px;
    height: 16px;
  }
`;

const Clock = styled.div`
  width: 76px;
  margin-left: 1px;
  display: flex;
  flex-direction: column;
  align-items: center;
  font-size: 12px;
  line-height: 18px;
`;

const ShowDesktop = styled.div`
  width: 14px;
  height: 39px;
  border: 1px solid #5d86a8;
  background: linear-gradient(#3d6f98, #2a5a85);
`;
